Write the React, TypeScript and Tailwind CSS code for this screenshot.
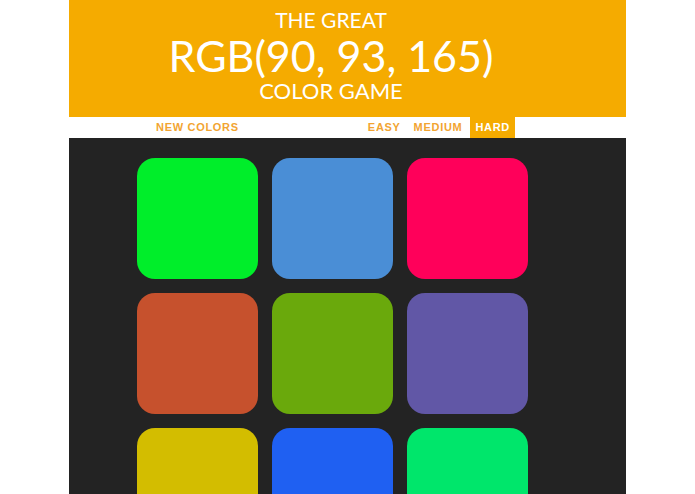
import { useState } from "react";

const COLORS = [
  "#00ee2a",
  "#4a8ed6",
  "#ff005a",
  "#c6512d",
  "#6aa90c",
  "#6157a6",
  "#d3bd00",
  "#1f60f2",
  "#00e66b",
];

const MODES = ["EASY", "MEDIUM", "HARD"];

export default function App() {
  const [mode, setMode] = useState("HARD");

  return (
    <div className="min-h-screen bg-white font-['Lato','Liberation_Sans',sans-serif]">
      <div className="mx-auto flex min-h-screen w-[557px] flex-col">
        {/* Title */}
        <header className="flex h-[117px] flex-col items-center bg-[#f5ab00] pr-[33px] pt-[8px] text-white">
          <div className="text-[21px] leading-[24px]">THE GREAT</div>
          <div className="text-[43px] leading-[47px]">RGB(90, 93, 165)</div>
          <div className="text-[22px] leading-[24px]">COLOR GAME</div>
        </header>

        {/* Controls */}
        <nav className="flex h-[21px] items-stretch bg-white font-['Liberation_Sans',sans-serif] text-[11px] font-bold tracking-[0.7px] text-[#f2a431]">
          <button type="button" className="ml-[87px] px-0">
            NEW COLORS
          </button>
          <div className="ml-auto mr-[111px] flex items-stretch gap-[3px]">
            {MODES.map((m) => (
              <button
                key={m}
                type="button"
                onClick={() => setMode(m)}
                className={`px-[5px] ${m === mode ? "bg-[#f5ab00] text-white" : ""}`}
              >
                {m}
              </button>
            ))}
          </div>
        </nav>

        {/* Swatches */}
        <main className="flex-1 bg-[#232323] pl-[68px] pt-[20px]">
          <div className="grid w-fit grid-cols-3 gap-[14px]">
            {COLORS.map((c) => (
              <div
                key={c}
                className="h-[121px] w-[121px] rounded-[18px]"
                style={{ backgroundColor: c }}
              />
            ))}
          </div>
        </main>
      </div>
    </div>
  );
}
